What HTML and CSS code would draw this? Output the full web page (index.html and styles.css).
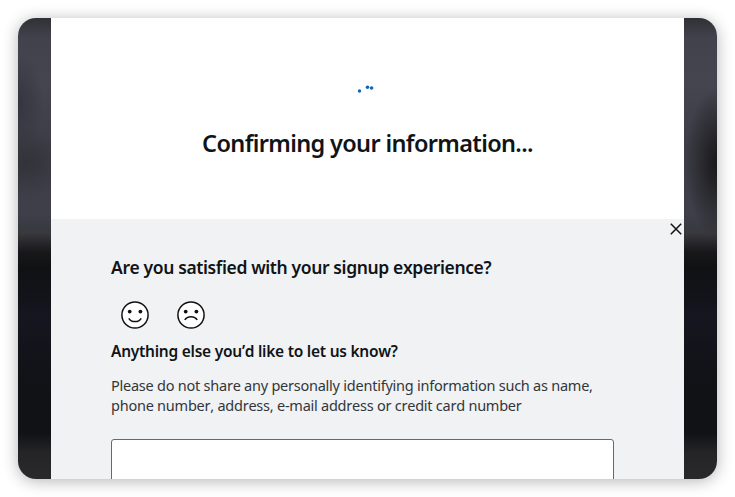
FILE: index.html
```
<!DOCTYPE html>
<html lang="en">
<head>
<meta charset="utf-8">
<title>Signup feedback</title>
<link rel="stylesheet" href="styles.css">
</head>
<body>
<main class="window">
  <section class="dialog">
    <div class="status">
      <svg class="spinner" width="20" height="20" viewBox="0 0 20 20" fill="#1664b5">
        <circle cx="3.5" cy="14" r="1.7"/><circle cx="11.5" cy="10.2" r="1.8"/><circle cx="15.6" cy="11" r="1.8"/>
      </svg>
      <h1 class="title">Confirming your information...</h1>
    </div>
    <form class="feedback">
      <button class="close" type="button" aria-label="Close">
        <svg width="12" height="12" viewBox="0 0 12 12" fill="none" stroke="#111" stroke-width="1.5"><path d="M.8.8l10.4 10.4M11.2.8L.8 11.2"/></svg>
      </button>
      <h2 class="question">Are you satisfied with your signup experience?</h2>
      <div class="faces">
        <svg width="28" height="28" viewBox="0 0 28 28" fill="none" stroke="#111" stroke-width="1.5">
          <circle cx="14" cy="14" r="13.1" fill="#fff"/><path d="M7.8 17.3c2.4 4.4 10 4.4 12.4 0"/>
          <g fill="#111" stroke="none"><circle cx="8.7" cy="10.6" r="1.9"/><circle cx="19.4" cy="10.6" r="1.9"/></g>
        </svg>
        <svg width="28" height="28" viewBox="0 0 28 28" fill="none" stroke="#111" stroke-width="1.5">
          <circle cx="14" cy="14" r="13.1" fill="#fff"/><path d="M7.8 19c2.4-4.4 10-4.4 12.4 0"/>
          <g fill="#111" stroke="none"><circle cx="8.7" cy="10.6" r="1.9"/><circle cx="19.4" cy="10.6" r="1.9"/></g>
        </svg>
      </div>
      <h3 class="prompt">Anything else you’d like to let us know?</h3>
      <p class="note">Please do not share any personally identifying information such as name,<br>phone number, address, e-mail address or credit card number</p>
      <div class="answer"></div>
    </form>
  </section>
</main>
</body>
</html>
```
FILE: styles.css
```
* { box-sizing: border-box; }
body {
  margin: 0;
  padding: 18px;
  height: 497px;
  overflow: hidden;
  background: #fff;
  color: #111417;
  font-family: "Noto Sans", "Open Sans", sans-serif;
  font-kerning: none;
}
h1, h2, h3, p { margin: 0; white-space: nowrap; }
.window {
  width: 699px;
  height: 461px;
  padding: 0 33px;
  border-radius: 18px;
  background:
    radial-gradient(ellipse 32px 75px at 100% 145px, #1c1c1e 10%, transparent) no-repeat,
    radial-gradient(ellipse 40px 34px at 8px 145px, #323339, transparent) no-repeat,
    radial-gradient(ellipse 26px 50px at 0 85px, #34353e, transparent) no-repeat,
    linear-gradient(#303137 0, #42424c 20px, #45454f 65px, #3d3d47 130px, #3e3f49 195px, #38383e 215px, #18181a 234px, #101113 250px, #15161f 300px, #101216 370px, #111215 415px, #252528 435px, #29282b 461px);
  box-shadow: 0 2px 16px rgba(0, 0, 0, .3);
}
.dialog { height: 461px; overflow: hidden; background: #fff; }
.status {
  display: flex;
  flex-direction: column;
  align-items: center;
  height: 201px;
  padding-top: 59px;
}
.spinner { margin-left: -4px; }
.title {
  margin-top: 30px;
  font-size: 23.5px;
  font-weight: 600;
  line-height: 32px;
  letter-spacing: -.65px;
}
.feedback {
  position: relative;
  height: 260px;
  padding: 35px 70px 0 60px;
  background: #f0f2f4;
}
.close {
  position: absolute;
  top: 4px;
  right: 2px;
  padding: 0;
  border: 0;
  background: none;
  line-height: 0;
}
.question { font-size: 17.5px; font-weight: 600; line-height: 26px; letter-spacing: -.38px; }
.faces { display: flex; gap: 28px; padding: 21px 0 0 10px; }
.faces svg { display: block; }
.prompt { margin-top: 12px; font-size: 15.5px; font-weight: 600; line-height: 20px; letter-spacing: -.25px; }
.note { margin-top: 14px; color: #33363a; font-size: 14.5px; line-height: 20px; letter-spacing: -.24px; }
.answer {
  height: 60px;
  margin-top: 24px;
  border: 1px solid #67696d;
  border-radius: 3px;
  background: #fff;
}
```
